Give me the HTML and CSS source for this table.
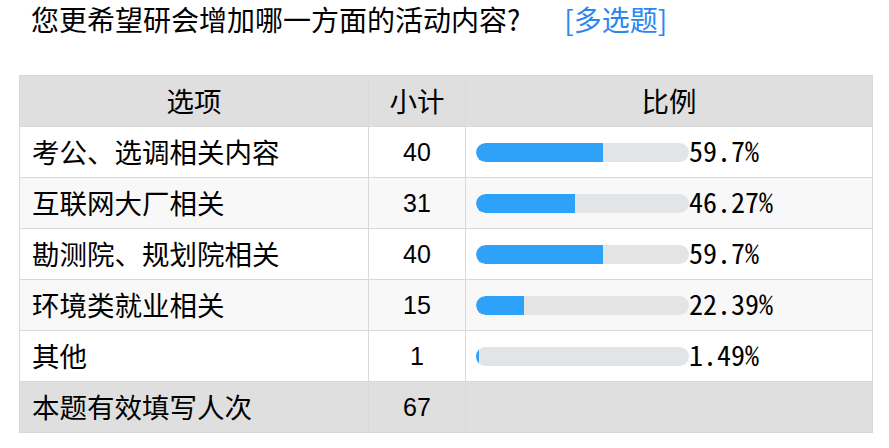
FILE: index.html
```html
<!DOCTYPE html>
<html lang="zh-CN">
<head>
<meta charset="utf-8">
<title>问卷统计</title>
<link rel="stylesheet" href="styles.css">
</head>
<body>
<div class="page">
  <h1 class="title">您更希望研会增加哪一方面的活动内容?<span class="tag">[多选题]</span></h1>
  <table class="stats">
    <colgroup><col class="c1"><col class="c2"><col class="c3"></colgroup>
    <thead>
      <tr><th>选项</th><th>小计</th><th>比例</th></tr>
    </thead>
    <tbody>
      <tr>
        <td class="opt">考公、选调相关内容</td>
        <td class="num">40</td>
        <td class="ratio"><div class="ratio-wrap"><div class="bar"><span class="fill" style="width:59.7%"></span></div><span class="pct">59.7%</span></div></td>
      </tr>
      <tr>
        <td class="opt">互联网大厂相关</td>
        <td class="num">31</td>
        <td class="ratio"><div class="ratio-wrap"><div class="bar"><span class="fill" style="width:46.27%"></span></div><span class="pct">46.27%</span></div></td>
      </tr>
      <tr>
        <td class="opt">勘测院、规划院相关</td>
        <td class="num">40</td>
        <td class="ratio"><div class="ratio-wrap"><div class="bar"><span class="fill" style="width:59.7%"></span></div><span class="pct">59.7%</span></div></td>
      </tr>
      <tr>
        <td class="opt">环境类就业相关</td>
        <td class="num">15</td>
        <td class="ratio"><div class="ratio-wrap"><div class="bar"><span class="fill" style="width:22.39%"></span></div><span class="pct">22.39%</span></div></td>
      </tr>
      <tr>
        <td class="opt">其他</td>
        <td class="num">1</td>
        <td class="ratio"><div class="ratio-wrap"><div class="bar"><span class="fill" style="width:1.49%"></span></div><span class="pct">1.49%</span></div></td>
      </tr>
    </tbody>
    <tfoot>
      <tr><td class="opt">本题有效填写人次</td><td class="num">67</td><td></td></tr>
    </tfoot>
  </table>
</div>
</body>
</html>
```

FILE: styles.css
```css
body {
  margin: 0;
  background: #fff;
  color: #000;
  font-family: "Noto Sans CJK SC", sans-serif;
}

.page {
  padding-left: 19px;
}

.title {
  margin: 0 0 37px;
  padding-left: 12px;
  height: 38px;
  font-size: 28px;
  line-height: 38px;
  font-weight: normal;
  color: #000;
}

.tag {
  margin-left: 44px;
  color: #2a86f0;
}

.stats {
  border-collapse: collapse;
  table-layout: fixed;
  width: 853px;
  font-size: 27.5px;
}

.c1 { width: 349px; }
.c2 { width: 97px; }
.c3 { width: 407px; }

.stats th,
.stats td {
  border: 1px solid #d9d9d9;
  height: 50px;
  padding: 0;
  line-height: 1;
  vertical-align: middle;
}

.stats th {
  background: #dfdfdf;
  font-weight: normal;
  text-align: center;
}

.stats tbody tr:nth-child(even) td {
  background: #f8f8f8;
}

.stats tfoot td {
  background: #dfdfdf;
}

.opt {
  padding-left: 12px !important;
  text-align: left;
}

.num {
  text-align: center;
  font-family: "Liberation Sans", "Noto Sans CJK SC", sans-serif;
  font-size: 25px;
}

.ratio {
  padding-left: 10px !important;
}

.ratio-wrap {
  display: flex;
  align-items: center;
}

.bar {
  width: 213px;
  height: 19px;
  background: #e3e4e6;
  border-radius: 10px;
  overflow: hidden;
  display: flex;
}

.fill {
  display: block;
  height: 100%;
  background: #2ea2f8;
  border-radius: 10px 0 0 10px;
}

.pct {
  font-size: 28px;
  font-feature-settings: "hwid" 1;
  line-height: 1;
  margin-bottom: 4px;
}
```
